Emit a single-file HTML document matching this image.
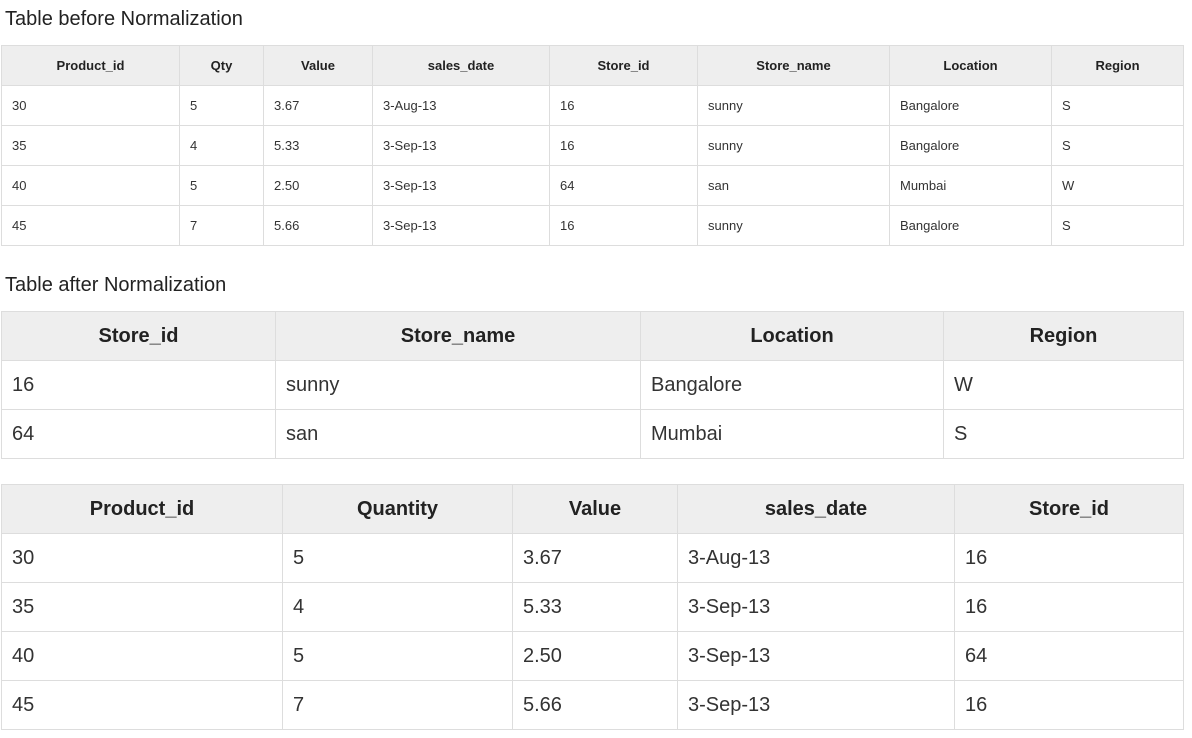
<!DOCTYPE html>
<html><head><style>
body{margin:0;width:1192px;height:738px;background:#fff;font-family:"Liberation Sans",Arial,sans-serif;color:#333;position:relative;overflow:hidden}
h3{position:absolute;left:5px;margin:0;font-weight:normal;font-size:20px;color:#222}
table{position:absolute;left:1px;border-collapse:collapse;table-layout:fixed;width:1182px}
td,th{border:1px solid #ddd;padding:0 0 0 10px;text-align:left;white-space:nowrap;overflow:hidden}
th{background:#eee;text-align:center;padding:0;font-weight:bold;color:#222}
.t1{top:45px;font-size:13px}
.t1 td,.t1 th{height:39px}
.t2,.t3{font-size:20px}
.t2 td,.t2 th,.t3 td,.t3 th{height:48px}
.t2{top:311px}.t3{top:484px}
</style></head><body>
<h3 style="top:8px">Table before Normalization</h3>
<table class="t1"><colgroup><col style="width:178px"><col style="width:84px"><col style="width:109px"><col style="width:177px"><col style="width:148px"><col style="width:192px"><col style="width:162px"><col style="width:132px"></colgroup>
<tr><th>Product_id</th><th>Qty</th><th>Value</th><th>sales_date</th><th>Store_id</th><th>Store_name</th><th>Location</th><th>Region</th></tr>
<tr><td>30</td><td>5</td><td>3.67</td><td>3-Aug-13</td><td>16</td><td>sunny</td><td>Bangalore</td><td>S</td></tr>
<tr><td>35</td><td>4</td><td>5.33</td><td>3-Sep-13</td><td>16</td><td>sunny</td><td>Bangalore</td><td>S</td></tr>
<tr><td>40</td><td>5</td><td>2.50</td><td>3-Sep-13</td><td>64</td><td>san</td><td>Mumbai</td><td>W</td></tr>
<tr><td>45</td><td>7</td><td>5.66</td><td>3-Sep-13</td><td>16</td><td>sunny</td><td>Bangalore</td><td>S</td></tr>
</table>
<h3 style="top:274px">Table after Normalization</h3>
<table class="t2"><colgroup><col style="width:274px"><col style="width:365px"><col style="width:303px"><col style="width:240px"></colgroup>
<tr><th>Store_id</th><th>Store_name</th><th>Location</th><th>Region</th></tr>
<tr><td>16</td><td>sunny</td><td>Bangalore</td><td>W</td></tr>
<tr><td>64</td><td>san</td><td>Mumbai</td><td>S</td></tr>
</table>
<table class="t3"><colgroup><col style="width:281px"><col style="width:230px"><col style="width:165px"><col style="width:277px"><col style="width:229px"></colgroup>
<tr><th>Product_id</th><th>Quantity</th><th>Value</th><th>sales_date</th><th>Store_id</th></tr>
<tr><td>30</td><td>5</td><td>3.67</td><td>3-Aug-13</td><td>16</td></tr>
<tr><td>35</td><td>4</td><td>5.33</td><td>3-Sep-13</td><td>16</td></tr>
<tr><td>40</td><td>5</td><td>2.50</td><td>3-Sep-13</td><td>64</td></tr>
<tr><td>45</td><td>7</td><td>5.66</td><td>3-Sep-13</td><td>16</td></tr>
</table>
</body></html>
